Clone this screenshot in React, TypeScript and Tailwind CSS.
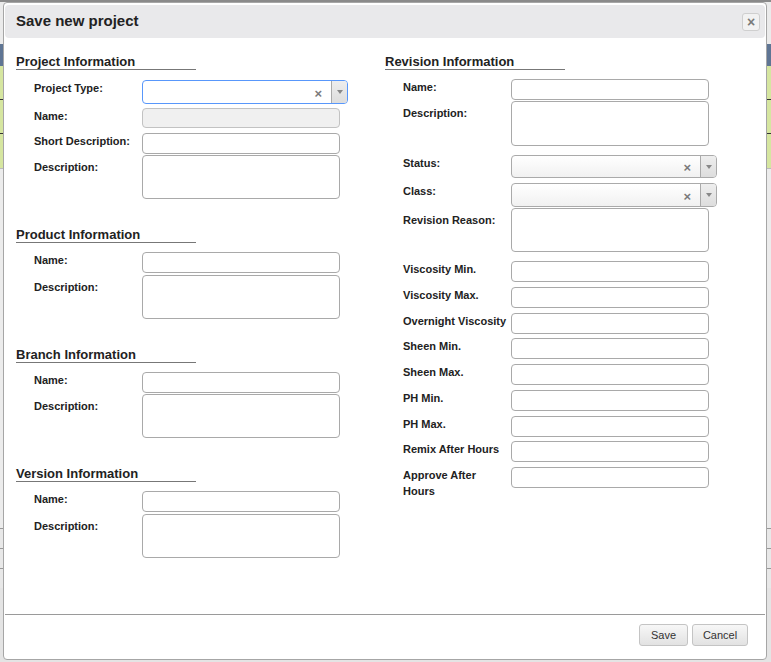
import React from 'react';

type Kind = 'input' | 'disabled' | 'select' | 'focus' | 'textarea';

interface Row {
  label: string;
  kind: Kind;
  rowClass: string;
  boxClass: string;
}

const leftSections: { title: string; headClass: string; rows: Row[] }[] = [
  {
    title: 'Project Information',
    headClass: '',
    rows: [
      { label: 'Project Type:', kind: 'focus', rowClass: 'mt-[10px]', boxClass: 'h-[24px]' },
      { label: 'Name:', kind: 'disabled', rowClass: 'mt-[4px]', boxClass: 'h-[20px]' },
      { label: 'Short Description:', kind: 'input', rowClass: 'mt-[5px]', boxClass: 'h-[21px]' },
      { label: 'Description:', kind: 'textarea', rowClass: 'mt-[1px]', boxClass: 'h-[44px]' },
    ],
  },
  {
    title: 'Product Information',
    headClass: 'mt-[28px]',
    rows: [
      { label: 'Name:', kind: 'input', rowClass: 'mt-[9px]', boxClass: 'h-[21px]' },
      { label: 'Description:', kind: 'textarea', rowClass: 'mt-[2px]', boxClass: 'h-[44px]' },
    ],
  },
  {
    title: 'Branch Information',
    headClass: 'mt-[28px]',
    rows: [
      { label: 'Name:', kind: 'input', rowClass: 'mt-[9px]', boxClass: 'h-[21px]' },
      { label: 'Description:', kind: 'textarea', rowClass: 'mt-[1px]', boxClass: 'h-[44px]' },
    ],
  },
  {
    title: 'Version Information',
    headClass: 'mt-[28px]',
    rows: [
      { label: 'Name:', kind: 'input', rowClass: 'mt-[9px]', boxClass: 'h-[21px]' },
      { label: 'Description:', kind: 'textarea', rowClass: 'mt-[2px]', boxClass: 'h-[44px]' },
    ],
  },
];

const revisionRows: Row[] = [
  { label: 'Name:', kind: 'input', rowClass: 'mt-[9px]', boxClass: 'h-[21px]' },
  { label: 'Description:', kind: 'textarea', rowClass: 'mt-[1px]', boxClass: 'h-[45px]' },
  { label: 'Status:', kind: 'select', rowClass: 'mt-[9px]', boxClass: 'h-[23px]' },
  { label: 'Class:', kind: 'select', rowClass: 'mt-[5px]', boxClass: 'h-[24px]' },
  { label: 'Revision Reason:', kind: 'textarea', rowClass: 'mt-[1px]', boxClass: 'h-[44px]' },
  { label: 'Viscosity Min.', kind: 'input', rowClass: 'mt-[9px]', boxClass: 'h-[21px]' },
  { label: 'Viscosity Max.', kind: 'input', rowClass: 'mt-[4.75px]', boxClass: 'h-[21px]' },
  { label: 'Overnight Viscosity', kind: 'input', rowClass: 'mt-[4.75px]', boxClass: 'h-[21px]' },
  { label: 'Sheen Min.', kind: 'input', rowClass: 'mt-[4.75px]', boxClass: 'h-[21px]' },
  { label: 'Sheen Max.', kind: 'input', rowClass: 'mt-[4.75px]', boxClass: 'h-[21px]' },
  { label: 'PH Min.', kind: 'input', rowClass: 'mt-[4.75px]', boxClass: 'h-[21px]' },
  { label: 'PH Max.', kind: 'input', rowClass: 'mt-[4.75px]', boxClass: 'h-[21px]' },
  { label: 'Remix After Hours', kind: 'input', rowClass: 'mt-[4.75px]', boxClass: 'h-[21px]' },
  { label: 'Approve After Hours', kind: 'input', rowClass: 'mt-[4.75px]', boxClass: 'h-[21px]' },
];

const Select: React.FC<{ focused?: boolean; boxClass: string }> = ({ focused, boxClass }) => (
  <div
    className={`flex w-[206px] rounded-[4px] border bg-linear-to-b from-white to-[#f1f1f1] ${boxClass} ${
      focused ? 'border-[#5897fb] from-white to-white' : 'border-[#aaaaaa]'
    }`}
  >
    <div className="flex-1" />
    <span className="mr-[9px] flex items-center pt-[2px] text-[13px] font-bold leading-none text-[#7a7a7a]">×</span>
    <div className="flex w-[16px] items-center justify-center rounded-r-[3px] border-l border-[#aaaaaa] bg-linear-to-b from-[#eeeeee] to-[#dddddd]">
      <div className="h-0 w-0 border-t-[4px] border-r-[3px] border-l-[3px] border-t-[#888] border-r-transparent border-l-transparent" />
    </div>
  </div>
);

const Control: React.FC<{ row: Row }> = ({ row }) => {
  if (row.kind === 'select' || row.kind === 'focus') {
    return <Select focused={row.kind === 'focus'} boxClass={row.boxClass} />;
  }
  if (row.kind === 'disabled') {
    return <div className={`w-[198px] rounded-[4px] border border-[#c2c2c2] bg-[#f0f0f0] ${row.boxClass}`} />;
  }
  return <div className={`w-[198px] rounded-[4px] border border-[#a9a9a9] bg-white ${row.boxClass}`} />;
};

const FieldRow: React.FC<{ row: Row }> = ({ row }) => (
  <div className={`flex items-start pl-[18px] ${row.rowClass}`}>
    <div
      className={`mr-[4px] w-[104px] text-[11px] font-bold leading-[16px] text-[#222] ${
        row.kind === 'textarea' ? 'pt-[4px]' : 'pt-0'
      }`}
    >
      {row.label}
    </div>
    <Control row={row} />
  </div>
);

const Heading: React.FC<{ title: string; className?: string }> = ({ title, className }) => (
  <div
    className={`h-[16px] w-[180px] border-b border-[#777] text-[13px] font-bold leading-[15px] text-[#222] ${className ?? ''}`}
  >
    {title}
  </div>
);

const Button: React.FC<{ label: string; w: string }> = ({ label, w }) => (
  <button
    className={`flex h-[22px] items-center justify-center rounded-[3px] border border-[#c4c4c4] bg-linear-to-b from-[#f7f7f7] to-[#e2e2e2] text-[11px] text-[#333] ${w}`}
  >
    {label}
  </button>
);

export default function App() {
  return (
    <div className="relative h-[662px] w-[771px] overflow-hidden bg-[#e4e4e4] font-['Liberation_Sans',Arial,sans-serif]">
      {/* page behind the dialog */}
      <div className="h-[2px] bg-[#8a8a8a]" />
      <div className="h-[42px] bg-[#ebebeb]" />
      <div className="h-[22px] bg-[#5f7594]" />
      <div className="h-[34px] border-b border-[#333] bg-[#d6e6a0]" />
      <div className="h-[34px] border-b border-[#333] bg-[#d6e6a0]" />
      <div className="h-[34px] bg-[#d6e6a0]" />
      <div className="h-[360px] border-t border-[#bbb] bg-[#ececec]" />
      <div className="h-[20px] border-t border-[#999] bg-[#e8e8e8]" />
      <div className="h-[20px] border-t border-[#999] bg-[#e8e8e8]" />
      <div className="h-[20px] border-t border-[#999] bg-[#e8e8e8]" />

      {/* dialog */}
      <div className="absolute top-[2px] left-[3px] flex h-[658px] w-[764px] flex-col rounded-[4px] border border-[#a6a6a6] bg-white px-[1px] pt-[2px] text-[#222]">
        <div className="flex h-[33px] items-center justify-between rounded-[4px] bg-[#e9e9eb] pr-[5px] pl-[11px]">
          <span className="text-[15px] font-bold text-[#222]">Save new project</span>
          <div className="flex h-[18px] w-[18px] items-center justify-center rounded-[3px] border border-[#cfcfcf] bg-[#f2f2f2] text-[14px] font-bold leading-none text-[#7a7a7a]">
            ×
          </div>
        </div>

        <div className="grid flex-1 grid-cols-[369px_1fr] pt-[16px] pl-[11px]">
          <div>
            {leftSections.map((s) => (
              <div key={s.title}>
                <Heading title={s.title} className={s.headClass} />
                {s.rows.map((r, i) => (
                  <FieldRow key={i} row={r} />
                ))}
              </div>
            ))}
          </div>
          <div>
            <Heading title="Revision Information" />
            {revisionRows.map((r, i) => (
              <FieldRow key={i} row={r} />
            ))}
          </div>
        </div>

        <div className="flex h-[45px] justify-end gap-[4px] border-t border-[#9a9a9a] pt-[9px] pr-[17px]">
          <Button label="Save" w="w-[49px]" />
          <Button label="Cancel" w="w-[56px]" />
        </div>
      </div>
    </div>
  );
}
